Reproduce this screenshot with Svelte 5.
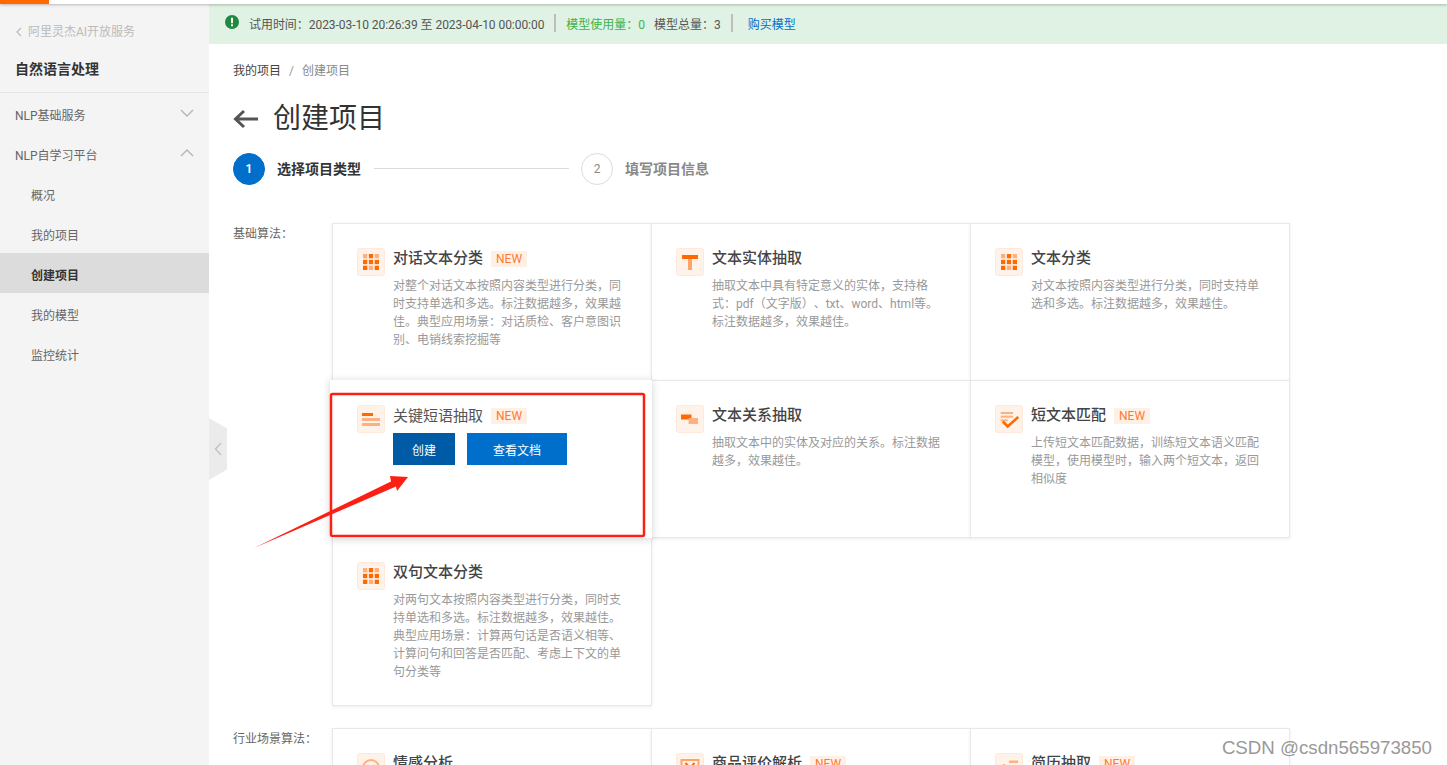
<script>
	const navSub = ['概况', '我的项目', '创建项目', '我的模型', '监控统计'];
	const basic = [
		{ title: '对话文本分类', isNew: true, icon: 'grid', desc: '对整个对话文本按照内容类型进行分类，同时支持单选和多选。标注数据越多，效果越佳。典型应用场景：对话质检、客户意图识别、电销线索挖掘等' },
		{ title: '文本实体抽取', icon: 'text', desc: '抽取文本中具有特定意义的实体，支持格式：pdf（文字版）、txt、word、html等。标注数据越多，效果越佳。' },
		{ title: '文本分类', icon: 'grid', desc: '对文本按照内容类型进行分类，同时支持单选和多选。标注数据越多，效果越佳。' },
		{ title: '关键短语抽取', isNew: true, icon: 'lines', active: true },
		{ title: '文本关系抽取', icon: 'relation', desc: '抽取文本中的实体及对应的关系。标注数据越多，效果越佳。' },
		{ title: '短文本匹配', isNew: true, icon: 'check', desc: '上传短文本匹配数据，训练短文本语义匹配模型，使用模型时，输入两个短文本，返回相似度' },
		{ title: '双句文本分类', icon: 'grid', desc: '对两句文本按照内容类型进行分类，同时支持单选和多选。标注数据越多，效果越佳。典型应用场景：计算两句话是否语义相等、计算问句和回答是否匹配、考虑上下文的单句分类等' }
	];
	const industry = [
		{ title: '情感分析', icon: 'smile' },
		{ title: '商品评价解析', isNew: true, icon: 'review' },
		{ title: '简历抽取', isNew: true, icon: 'resume' }
	];
</script>

{#snippet cardIcon(kind)}
	<svg class="icon" viewBox="0 0 28 28" width="28" height="28">
		<rect x="0.5" y="0.5" width="27" height="27" rx="2" fill="#fff2e8" stroke="#ffe9dc" />
		{#if kind === 'grid'}
			<g fill="#ff6a00">
				<rect x="6" y="6" width="4.3" height="4.3" fill="#ffb080" />
				<rect x="11.85" y="6" width="4.3" height="4.3" />
				<rect x="17.7" y="6" width="4.3" height="4.3" fill="#ffb080" />
				<rect x="6" y="11.85" width="4.3" height="4.3" />
				<rect x="11.85" y="11.85" width="4.3" height="4.3" />
				<rect x="17.7" y="11.85" width="4.3" height="4.3" />
				<rect x="6" y="17.7" width="4.3" height="4.3" />
				<rect x="11.85" y="17.7" width="4.3" height="4.3" fill="#ffb080" />
				<rect x="17.7" y="17.7" width="4.3" height="4.3" />
			</g>
		{:else if kind === 'text'}
			<rect x="6" y="7" width="16" height="4" fill="#ff6a00" />
			<rect x="12" y="11" width="4" height="11" fill="#ffa468" />
		{:else if kind === 'lines'}
			<rect x="5" y="8" width="11" height="3" fill="#ff6a00" />
			<rect x="5" y="13" width="18" height="3" fill="#ffb080" />
			<rect x="5" y="18" width="18" height="3" fill="#ffb080" />
		{:else if kind === 'relation'}
			<rect x="5" y="9.5" width="10.5" height="5" fill="#ff6a00" />
			<rect x="12.6" y="13" width="9.4" height="6" fill="#ffb080" />
		{:else if kind === 'check'}
			<rect x="5.7" y="7" width="12.3" height="2" fill="#ffb080" />
			<rect x="5.7" y="10.7" width="12.3" height="2" fill="#ffb080" />
			<rect x="5.7" y="14.4" width="7" height="2" fill="#ffb080" />
			<path d="M7.8 16.5 L12.7 21.5 L23.3 12" fill="none" stroke="#ff6a00" stroke-width="2.6" />
		{:else if kind === 'smile'}
			<circle cx="14" cy="15" r="8" fill="none" stroke="#ffb080" stroke-width="2" />
			<circle cx="11" cy="13" r="1.2" fill="#ff6a00" />
			<circle cx="17" cy="13" r="1.2" fill="#ff6a00" />
		{:else if kind === 'review'}
			<rect x="5.5" y="7" width="17" height="15" fill="none" stroke="#ffa468" stroke-width="2" />
			<path d="M9.5 10 L14 15 L18.5 10" fill="none" stroke="#ff6a00" stroke-width="2" />
		{:else if kind === 'resume'}
			<circle cx="9" cy="14" r="2.6" fill="#ff6a00" />
			<rect x="14" y="7.5" width="9" height="2.5" fill="#ffb080" />
			<rect x="14" y="12.5" width="9" height="2.5" fill="#ffb080" />
		{/if}
	</svg>
{/snippet}

{#snippet card(item)}
	<div class="card" class:hover={item.active}>
		{@render cardIcon(item.icon)}
		<div class="body">
			<div class="title">
				<span>{item.title}</span>
				{#if item.isNew}<span class="new">NEW</span>{/if}
			</div>
			{#if item.active}
				<div class="actions">
					<button class="create">创建</button>
					<button class="docs">查看文档</button>
				</div>
			{:else if item.desc}
				<p>{item.desc}</p>
			{/if}
		</div>
	</div>
{/snippet}

<div class="page">
	<div class="topbar"><div class="logo"></div></div>
	<div class="layout">
		<aside>
			<div class="back">
				<svg width="8" height="10" viewBox="0 0 8 10"><path d="M6 1 L2 5 L6 9" fill="none" stroke="#bbb" stroke-width="1.2" /></svg>
				阿里灵杰AI开放服务
			</div>
			<div class="product">自然语言处理</div>
			<nav>
				<div class="group">
					NLP基础服务
					<svg width="14" height="8" viewBox="0 0 14 8"><path d="M1 1 L7 7 L13 1" fill="none" stroke="#b5b5b5" stroke-width="1.4" /></svg>
				</div>
				<div class="group">
					NLP自学习平台
					<svg width="14" height="8" viewBox="0 0 14 8"><path d="M1 7 L7 1 L13 7" fill="none" stroke="#b5b5b5" stroke-width="1.4" /></svg>
				</div>
				{#each navSub as name}
					<div class="sub" class:current={name === '创建项目'}>{name}</div>
				{/each}
			</nav>
			<div class="handle">
				<svg width="8" height="14" viewBox="0 0 8 14"><path d="M7 1 L1.5 7 L7 13" fill="none" stroke="#c4c4c4" stroke-width="1.5" /></svg>
			</div>
		</aside>
		<main>
			<div class="banner">
				<svg class="alert" width="14" height="14" viewBox="0 0 14 14">
					<circle cx="7" cy="7" r="7" fill="#1f8a3d" />
					<rect x="6" y="2.8" width="2" height="5.4" fill="#fff" />
					<rect x="6" y="9.3" width="2" height="2" fill="#fff" />
				</svg>
				<span class="period">试用时间：2023-03-10 20:26:39 至 2023-04-10 00:00:00</span>
				<span class="sep"></span>
				<span class="used">模型使用量：0</span>
				<span class="total">模型总量：3</span>
				<span class="sep"></span>
				<span class="buy">购买模型</span>
			</div>
			<div class="content">
				<div class="crumbs"><span>我的项目</span><i>/</i><em>创建项目</em></div>
				<div class="heading">
					<svg width="26" height="20" viewBox="0 0 26 20"><path d="M25 10 H3 M11 2 L2.5 10 L11 18" fill="none" stroke="#555" stroke-width="3" /></svg>
					<h1>创建项目</h1>
				</div>
				<div class="steps">
					<span class="dot on">1</span>
					<span class="step on">选择项目类型</span>
					<span class="line"></span>
					<span class="dot">2</span>
					<span class="step">填写项目信息</span>
				</div>
				<section>
					<div class="label">基础算法：</div>
					<div class="cards">
						{#each basic as item}
							{@render card(item)}
						{/each}
					</div>
				</section>
				<section class="second">
					<div class="label">行业场景算法：</div>
					<div class="cards">
						{#each industry as item}
							{@render card(item)}
						{/each}
					</div>
				</section>
			</div>
		</main>
	</div>

	<svg class="marks" width="1447" height="765" viewBox="0 0 1447 765">
		<rect x="331" y="394" width="313" height="142" rx="1.5" fill="none" stroke="#fb1f14" stroke-width="2.5" />
		<polygon points="254,548 391,481.5 390,476 408,477 397,491 396,486.5" fill="#fb1f14" />
	</svg>
	<div class="watermark">CSDN @csdn565973850</div>
</div>

<style>
	:global(body) {
		margin: 0;
		background: #fff;
	}
	.page {
		position: relative;
		height: 765px;
		overflow: hidden;
		font-family: Roboto, "Noto Sans CJK SC", sans-serif;
		font-size: 12px;
		color: #666;
	}
	.topbar {
		position: relative;
		z-index: 3;
		height: 4px;
		background: #fff;
		box-shadow: 0 1px 3px rgba(0, 0, 0, 0.25);
	}
	.logo {
		width: 49px;
		height: 4px;
		background: #ff6a00;
	}
	.layout {
		display: flex;
		height: 761px;
	}
	aside {
		position: relative;
		flex: 0 0 209px;
		background: #f4f4f4;
	}
	.back {
		display: flex;
		align-items: center;
		gap: 5px;
		height: 20px;
		padding: 18px 0 0 15px;
		color: #bbb;
		line-height: 20px;
	}
	.product {
		height: 42px;
		padding: 0 15px;
		border-bottom: 1px solid #e6e6e6;
		margin-top: 8px;
		line-height: 38px;
		font-size: 14px;
		font-weight: 700;
		color: #333;
	}
	.group, .sub {
		height: 40px;
		line-height: 46px;
		padding-left: 15px;
	}
	.group {
		display: flex;
		justify-content: space-between;
		align-items: flex-start;
		padding-right: 15px;
		color: #666;
	}
	.group svg {
		margin-top: 16px;
	}
	.sub {
		padding-left: 31px;
		color: #666;
	}
	.sub.current {
		background: #dcdcdc;
		font-weight: 700;
		color: #333;
	}
	.handle {
		position: absolute;
		left: 209px;
		top: 414px;
		width: 18px;
		height: 62px;
		display: flex;
		align-items: center;
		justify-content: center;
		background: #ebebeb;
		clip-path: polygon(0 0, 100% 17%, 100% 83%, 0 100%);
	}
	main {
		flex: 1;
		min-width: 0;
	}
	.banner {
		display: flex;
		align-items: center;
		height: 40px;
		padding-left: 16px;
		padding-bottom: 2px;
		box-sizing: border-box;
		background: #dff2e3;
		color: #555;
		white-space: nowrap;
	}
	.alert {
		margin-top: -3px;
		margin-right: 10px;
	}
	.period {
		letter-spacing: -0.05px;
	}
	.sep {
		width: 2px;
		height: 18px;
		margin: 0 10px;
		background: #bdbdbd;
	}
	.sep:first-of-type {
		margin-right: 11px;
	}
	.used {
		color: #3cb44a;
	}
	.total {
		margin-left: 9px;
	}
	.buy {
		margin-left: 5px;
		color: #0070cc;
	}
	.content {
		padding: 17px 0 0 24px;
	}
	.crumbs {
		height: 20px;
		line-height: 20px;
		color: #444;
	}
	.crumbs i {
		margin: 0 8px;
		font-style: normal;
		color: #999;
	}
	.crumbs em {
		font-style: normal;
		color: #888;
	}
	.heading {
		display: flex;
		align-items: center;
		gap: 14px;
		margin-top: 18px;
		height: 40px;
	}
	h1 {
		margin: 0;
		font-size: 28px;
		font-weight: 400;
		line-height: 40px;
		color: #333;
	}
	.steps {
		display: flex;
		align-items: center;
		margin-top: 14px;
		height: 32px;
	}
	.dot {
		box-sizing: border-box;
		width: 32px;
		height: 32px;
		border: 1px solid #dcdcdc;
		border-radius: 50%;
		text-align: center;
		line-height: 30px;
		color: #888;
	}
	.dot.on {
		background: #006fcc;
		border-color: #006fcc;
		color: #fff;
		font-weight: 600;
	}
	.step {
		margin-left: 12px;
		font-size: 14px;
		font-weight: 700;
		color: #888;
		margin-top: -2px;
	}
	.step.on {
		color: #333;
	}
	.line {
		width: 195px;
		height: 1px;
		margin: -2px 12px 0 13px;
		background: #dcdcdc;
	}
	section {
		display: flex;
		margin-top: 38px;
	}
	section.second {
		margin-top: 23px;
	}
	.label {
		flex: 0 0 99px;
		padding-top: 1px;
		line-height: 20px;
	}
	.cards {
		display: grid;
		grid-template-columns: repeat(3, 319px);
		grid-auto-rows: minmax(157px, auto);
		flex: 0 0 957px;
		box-sizing: border-box;
	}
	.card {
		display: flex;
		gap: 8px;
		box-sizing: border-box;
		padding: 24px 28px 24px 24px;
		margin: 0 -1px -1px 0;
		border: 1px solid #e8e8e8;
		box-shadow: 0 1px 3px rgba(0, 0, 0, 0.08);
		background: #fff;
	}
	.card.hover {
		position: relative;
		z-index: 1;
		margin: 0 -1px -1px -2px;
		padding-left: 26px;
		border-color: transparent;
		box-shadow: 0 1px 8px rgba(0, 0, 0, 0.18);
	}
	.icon {
		flex: none;
	}
	.body {
		min-width: 0;
		flex: 1;
	}
	.title {
		display: flex;
		align-items: center;
		gap: 8px;
		height: 20px;
		margin-top: -2px;
		font-size: 15px;
		font-weight: 500;
		color: #444;
	}
	.hover .title {
		margin-top: -1px;
		font-weight: 400;
		color: #555;
	}
	.new {
		padding: 0 5px;
		background: #fff0e6;
		color: #ff7a30;
		font-size: 12px;
		font-weight: 400;
		line-height: 16px;
		margin-top: 6px;
	}
	.hover .new {
		margin-top: 4px;
	}
	p {
		margin: 11px 0 0;
		line-height: 18px;
		color: #999;
		text-spacing-trim: space-all;
	}
	.actions {
		display: flex;
		gap: 12px;
		margin-top: 9px;
	}
	button {
		height: 32px;
		border: 0;
		padding: 0;
		color: #fff;
		font: inherit;
	}
	.create {
		width: 62px;
		background: #005ba6;
	}
	.docs {
		width: 100px;
		background: #006fcc;
	}
	.marks {
		position: absolute;
		left: 0;
		top: 0;
		z-index: 5;
		pointer-events: none;
	}
	.watermark {
		position: absolute;
		z-index: 5;
		right: 15px;
		top: 737px;
		font-family: "Liberation Sans", sans-serif;
		font-size: 18.7px;
		line-height: 22px;
		color: #999;
	}
</style>
